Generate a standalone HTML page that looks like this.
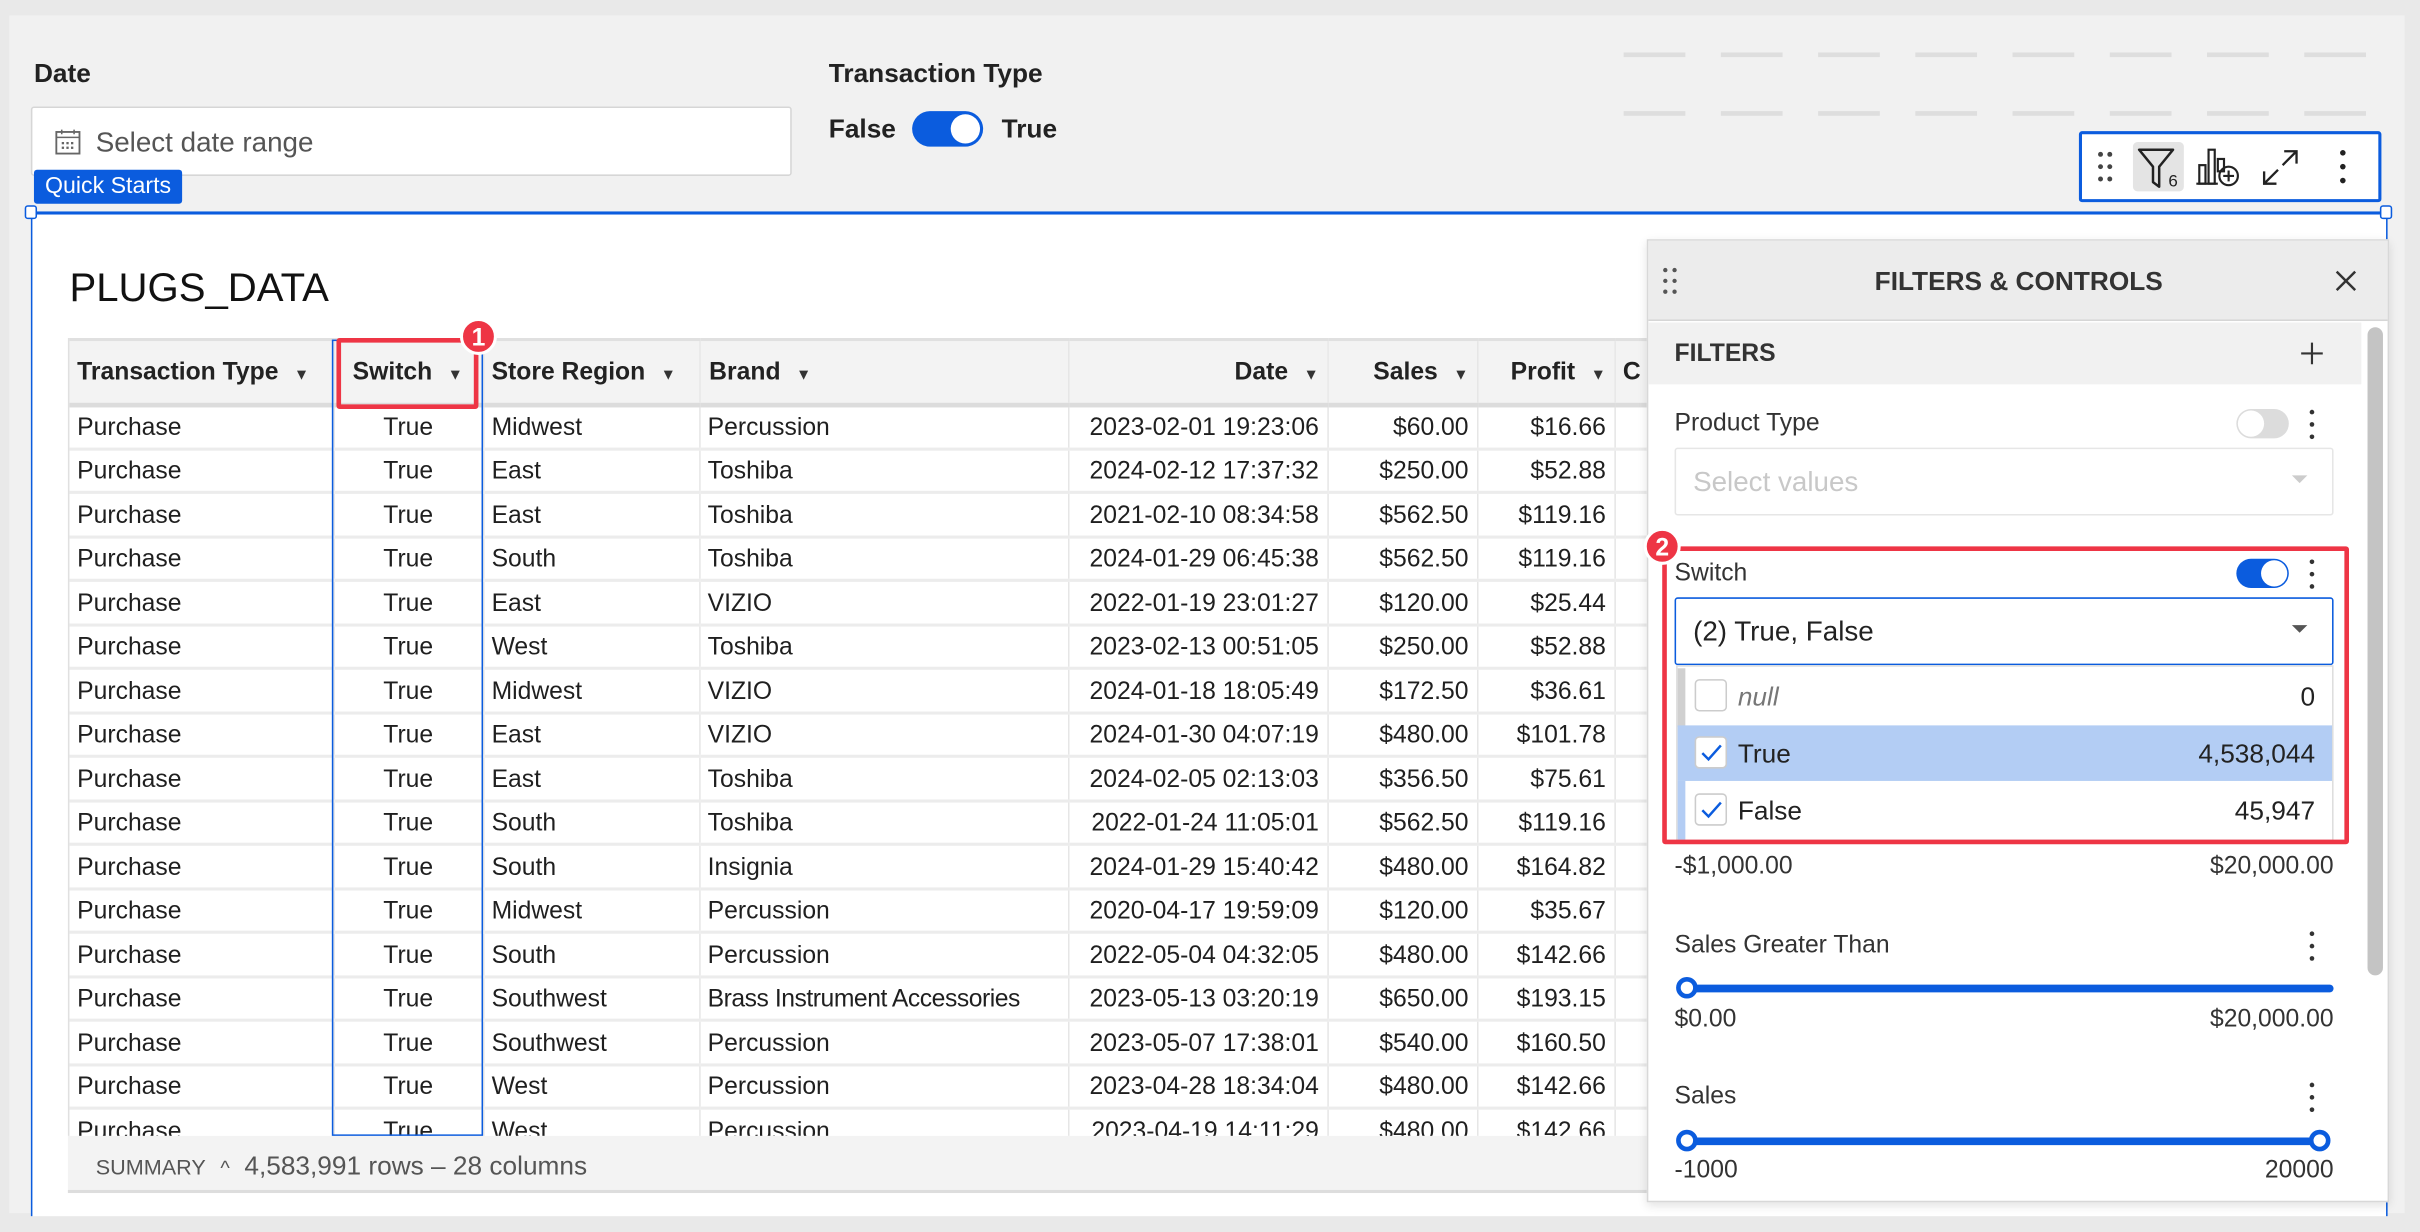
<!DOCTYPE html>
<html><head><meta charset="utf-8"><style>
*{box-sizing:border-box;margin:0;padding:0}
html,body{width:2420px;height:1232px;overflow:hidden;background:#e9e9e9}
#w{position:absolute;left:0;top:0;width:1568px;height:798px;transform:scale(1.54337);transform-origin:0 0;font-family:"Liberation Sans",sans-serif;color:#1f1f1f}
.a{position:absolute}
.page{left:6px;top:10px;width:1552px;height:776px;background:#f1f1f1}
.lbl{font-size:17px;font-weight:bold;color:#222}
.dash{height:3px;background:#dedede;width:40px}
table{border-collapse:collapse;table-layout:fixed;font-size:16px}
td,th{height:28.5px;padding:3px 5px 0;border-right:1px solid #e6e6e6;border-bottom:2px solid #ececec;white-space:nowrap;overflow:hidden;text-align:left;font-weight:normal}
th{height:42px;background:#f3f3f3;border-bottom:3px solid #dcdcdc;border-top:2px solid #e0e0e0;font-weight:bold;font-size:16px;color:#222}
.r{text-align:right}.c{text-align:center}
.car{font-size:10px;margin-left:10px;color:#333}
.badge{width:24px;height:24px;border-radius:12px;background:#ee3545;color:#fff;font-weight:bold;font-size:16px;text-align:center;line-height:24px;border:2px solid #fff}
.hd{width:14px;height:14px;border-radius:8px;background:#fff;border:3px solid #0b5cde}
.sl{height:5px;background:#0b5cde;border-radius:3px}
.chk{width:21px;height:21px;border:1px solid #ccc;border-radius:3px;background:#fff}
</style></head><body><div id="w">
<div class="a page"></div>
<div class="a lbl" style="left:22px;top:38px">Date</div>
<div class="a" style="left:20px;top:69px;width:493px;height:45px;background:#fff;border:1px solid #d6d6d6;border-radius:2px"></div>
<svg class="a" style="left:35px;top:83px" width="18" height="18" viewBox="0 0 18 18"><rect x="1.5" y="2.5" width="15" height="14" fill="none" stroke="#666" stroke-width="1.2"/><line x1="1.5" y1="6" x2="16.5" y2="6" stroke="#666"/><line x1="5" y1="1" x2="5" y2="4" stroke="#666"/><line x1="13" y1="1" x2="13" y2="4" stroke="#666"/><g fill="#666"><rect x="5" y="9" width="1.5" height="1.5"/><rect x="8" y="9" width="1.5" height="1.5"/><rect x="11" y="9" width="1.5" height="1.5"/><rect x="5" y="12" width="1.5" height="1.5"/><rect x="8" y="12" width="1.5" height="1.5"/><rect x="11" y="12" width="1.5" height="1.5"/></g></svg>
<div class="a" style="left:62px;top:82px;font-size:18px;color:#555">Select date range</div>
<div class="a" style="left:22px;top:110px;width:96px;height:22px;background:#0b5cde;color:#fff;font-size:15px;line-height:22px;text-align:center;border-radius:2px">Quick Starts</div>
<div class="a lbl" style="left:537px;top:38px">Transaction Type</div>
<div class="a lbl" style="left:537px;top:74px">False</div>
<div class="a" style="left:591px;top:72px;width:46px;height:23px;border-radius:12px;background:#0b5cde"><div class="a" style="right:2px;top:2px;width:19px;height:19px;border-radius:10px;background:#fff"></div></div>
<div class="a lbl" style="left:649px;top:74px">True</div>
<div class="a" style="left:1052px;top:34px;display:flex;gap:23px"><div class="dash"></div><div class="dash"></div><div class="dash"></div><div class="dash"></div><div class="dash"></div><div class="dash"></div><div class="dash"></div><div class="dash"></div></div>
<div class="a" style="left:1052px;top:72px;display:flex;gap:23px"><div class="dash"></div><div class="dash"></div><div class="dash"></div><div class="dash"></div><div class="dash"></div><div class="dash"></div><div class="dash"></div><div class="dash"></div></div>
<div class="a" style="left:20px;top:137px;width:1527px;height:651px;background:#fff;border-top:2px solid #0b5cde;border-left:1px solid #0b5cde;border-right:1px solid #0b5cde"></div>
<div class="a" style="left:16px;top:133px;width:8px;height:9px;border:1.5px solid #0b5cde;background:#fff;border-radius:2px"></div>
<div class="a" style="left:1542px;top:133px;width:8px;height:9px;border:1.5px solid #0b5cde;background:#fff;border-radius:2px"></div>
<div class="a" style="left:1347px;top:85px;width:196px;height:46px;background:#fff;border:2px solid #0b5cde;border-radius:2px"></div>
<svg class="a" style="left:1358px;top:96px" width="12" height="24"><g fill="#444"><circle cx="3" cy="4" r="1.6"/><circle cx="9" cy="4" r="1.6"/><circle cx="3" cy="12" r="1.6"/><circle cx="9" cy="12" r="1.6"/><circle cx="3" cy="20" r="1.6"/><circle cx="9" cy="20" r="1.6"/></g></svg>
<div class="a" style="left:1382px;top:92px;width:33px;height:32px;background:#e4e4e4;border-radius:3px"></div>
<svg class="a" style="left:1384px;top:94px" width="32" height="30"><path d="M2 3 H24 L15 14 V27 L11 24 V14 Z" fill="none" stroke="#222" stroke-width="1.6" stroke-linejoin="round"/><text x="21" y="27" font-size="11" font-family="Liberation Sans" fill="#222">6</text></svg>
<svg class="a" style="left:1423px;top:93px" width="32" height="32"><g fill="none" stroke="#222" stroke-width="1.4"><rect x="2" y="14" width="4" height="12"/><rect x="8" y="4" width="4" height="22"/><rect x="14" y="10" width="4" height="8"/><line x1="0" y1="26" x2="14" y2="26"/><circle cx="21" cy="21" r="6"/><line x1="21" y1="17.5" x2="21" y2="24.5"/><line x1="17.5" y1="21" x2="24.5" y2="21"/></g></svg>
<svg class="a" style="left:1464px;top:95px" width="28" height="28"><g fill="none" stroke="#222" stroke-width="1.5"><path d="M16 3H24V11M24 3L15 12"/><path d="M3 16V24H11M3 24L12 15"/></g></svg>
<svg class="a" style="left:1514px;top:96px" width="8" height="24"><g fill="#222"><circle cx="4" cy="3" r="1.8"/><circle cx="4" cy="12" r="1.8"/><circle cx="4" cy="21" r="1.8"/></g></svg>
<div class="a" style="left:45px;top:171px;font-size:26px;color:#111">PLUGS_DATA</div>
<div class="a" style="left:44px;top:219px;width:1040px;height:517px;overflow:hidden;border-left:1px solid #e0e0e0">
<table style="width:1200px">
<colgroup><col style="width:171px"><col style="width:97px"><col style="width:140px"><col style="width:239px"><col style="width:168px"><col style="width:97px"><col style="width:89px"><col style="width:199px"></colgroup>
<tr><th>Transaction Type<span class="car">▼</span></th><th style="padding-left:12px">Switch<span class="car">▼</span></th><th>Store Region<span class="car">▼</span></th><th style="padding-left:6px">Brand<span class="car">▼</span></th><th class="r">Date<span class="car">▼</span></th><th class="r">Sales<span class="car">▼</span></th><th class="r">Profit<span class="car">▼</span></th><th>C</th></tr>
<tr><td>Purchase</td><td class="c">True</td><td>Midwest</td><td>Percussion</td><td class="r">2023-02-01 19:23:06</td><td class="r">$60.00</td><td class="r">$16.66</td><td></td></tr>
<tr><td>Purchase</td><td class="c">True</td><td>East</td><td>Toshiba</td><td class="r">2024-02-12 17:37:32</td><td class="r">$250.00</td><td class="r">$52.88</td><td></td></tr>
<tr><td>Purchase</td><td class="c">True</td><td>East</td><td>Toshiba</td><td class="r">2021-02-10 08:34:58</td><td class="r">$562.50</td><td class="r">$119.16</td><td></td></tr>
<tr><td>Purchase</td><td class="c">True</td><td>South</td><td>Toshiba</td><td class="r">2024-01-29 06:45:38</td><td class="r">$562.50</td><td class="r">$119.16</td><td></td></tr>
<tr><td>Purchase</td><td class="c">True</td><td>East</td><td>VIZIO</td><td class="r">2022-01-19 23:01:27</td><td class="r">$120.00</td><td class="r">$25.44</td><td></td></tr>
<tr><td>Purchase</td><td class="c">True</td><td>West</td><td>Toshiba</td><td class="r">2023-02-13 00:51:05</td><td class="r">$250.00</td><td class="r">$52.88</td><td></td></tr>
<tr><td>Purchase</td><td class="c">True</td><td>Midwest</td><td>VIZIO</td><td class="r">2024-01-18 18:05:49</td><td class="r">$172.50</td><td class="r">$36.61</td><td></td></tr>
<tr><td>Purchase</td><td class="c">True</td><td>East</td><td>VIZIO</td><td class="r">2024-01-30 04:07:19</td><td class="r">$480.00</td><td class="r">$101.78</td><td></td></tr>
<tr><td>Purchase</td><td class="c">True</td><td>East</td><td>Toshiba</td><td class="r">2024-02-05 02:13:03</td><td class="r">$356.50</td><td class="r">$75.61</td><td></td></tr>
<tr><td>Purchase</td><td class="c">True</td><td>South</td><td>Toshiba</td><td class="r">2022-01-24 11:05:01</td><td class="r">$562.50</td><td class="r">$119.16</td><td></td></tr>
<tr><td>Purchase</td><td class="c">True</td><td>South</td><td>Insignia</td><td class="r">2024-01-29 15:40:42</td><td class="r">$480.00</td><td class="r">$164.82</td><td></td></tr>
<tr><td>Purchase</td><td class="c">True</td><td>Midwest</td><td>Percussion</td><td class="r">2020-04-17 19:59:09</td><td class="r">$120.00</td><td class="r">$35.67</td><td></td></tr>
<tr><td>Purchase</td><td class="c">True</td><td>South</td><td>Percussion</td><td class="r">2022-05-04 04:32:05</td><td class="r">$480.00</td><td class="r">$142.66</td><td></td></tr>
<tr><td>Purchase</td><td class="c">True</td><td>Southwest</td><td style="font-size:16px;padding:3px 3px 0 5px;letter-spacing:-0.3px">Brass Instrument Accessories</td><td class="r">2023-05-13 03:20:19</td><td class="r">$650.00</td><td class="r">$193.15</td><td></td></tr>
<tr><td>Purchase</td><td class="c">True</td><td>Southwest</td><td>Percussion</td><td class="r">2023-05-07 17:38:01</td><td class="r">$540.00</td><td class="r">$160.50</td><td></td></tr>
<tr><td>Purchase</td><td class="c">True</td><td>West</td><td>Percussion</td><td class="r">2023-04-28 18:34:04</td><td class="r">$480.00</td><td class="r">$142.66</td><td></td></tr>
<tr><td>Purchase</td><td class="c">True</td><td>West</td><td>Percussion</td><td class="r">2023-04-19 14:11:29</td><td class="r">$480.00</td><td class="r">$142.66</td><td></td></tr>
</table></div>
<div class="a" style="left:215px;top:220px;width:98px;height:516px;border:1.5px solid #0b5cde"></div>
<div class="a" style="left:218px;top:219px;width:92px;height:46px;border:3px solid #ee3545;border-radius:2px"></div>
<div class="a badge" style="left:298px;top:206px">1</div>
<div class="a" style="left:44px;top:736px;width:1030px;height:37px;background:#f3f3f3;border-bottom:2px solid #ddd;font-size:17px;color:#555;line-height:40px;padding-left:18px"><span style="font-size:14px">SUMMARY</span>&nbsp;&nbsp;<span style="font-size:13px">^</span>&nbsp;&nbsp;4,583,991 rows – 28 columns</div>
<div class="a" style="left:1067px;top:155px;width:481px;height:624px;background:#fff;border:1px solid #d8d8d8;box-shadow:0 2px 6px rgba(0,0,0,.12)"></div>
<div class="a" style="left:1068px;top:156px;width:479px;height:52px;background:#ececec;border-bottom:1px solid #d6d6d6"></div>
<svg class="a" style="left:1077px;top:172px" width="10" height="20"><g fill="#555"><circle cx="2" cy="3" r="1.4"/><circle cx="8" cy="3" r="1.4"/><circle cx="2" cy="10" r="1.4"/><circle cx="8" cy="10" r="1.4"/><circle cx="2" cy="17" r="1.4"/><circle cx="8" cy="17" r="1.4"/></g></svg>
<div class="a" style="left:1068px;top:173px;width:480px;text-align:center;font-size:17px;font-weight:bold;color:#333">FILTERS &amp; CONTROLS</div>
<svg class="a" style="left:1512px;top:174px" width="16" height="16"><path d="M2 2L14 14M14 2L2 14" stroke="#333" stroke-width="1.6"/></svg>
<div class="a" style="left:1068px;top:209px;width:462px;height:40px;background:#f1f1f1"></div>
<div class="a" style="left:1085px;top:221px;font-size:16px;font-weight:bold;color:#333">FILTERS</div>
<svg class="a" style="left:1490px;top:221px" width="16" height="16"><path d="M8 1V15M1 8H15" stroke="#333" stroke-width="1.4"/></svg>
<div class="a" style="left:1534px;top:212px;width:10px;height:420px;background:#c4c4c4;border-radius:5px"></div>
<div class="a" style="left:1085px;top:266px;font-size:16px;color:#333">Product Type</div>
<div class="a" style="left:1449px;top:265px;width:34px;height:19px;border-radius:10px;background:#dcdcdc"><div class="a" style="left:1px;top:1px;width:17px;height:17px;border-radius:9px;background:#fff"></div></div>
<svg class="a" style="left:1494px;top:264px" width="8" height="22"><g fill="#333"><circle cx="4" cy="3" r="1.5"/><circle cx="4" cy="11" r="1.5"/><circle cx="4" cy="19" r="1.5"/></g></svg>
<div class="a" style="left:1085px;top:290px;width:427px;height:44px;border:1px solid #e6e6e6;border-radius:2px"></div>
<div class="a" style="left:1097px;top:302px;font-size:18px;color:#c8c8c8">Select values</div>
<div class="a" style="left:1485px;top:308px;border-left:5px solid transparent;border-right:5px solid transparent;border-top:5px solid #ccc"></div>
<div class="a" style="left:1085px;top:363px;font-size:16px;color:#333">Switch</div>
<div class="a" style="left:1449px;top:362px;width:34px;height:19px;border-radius:10px;background:#0b5cde"><div class="a" style="right:1px;top:1px;width:17px;height:17px;border-radius:9px;background:#fff"></div></div>
<svg class="a" style="left:1494px;top:361px" width="8" height="22"><g fill="#333"><circle cx="4" cy="3" r="1.5"/><circle cx="4" cy="11" r="1.5"/><circle cx="4" cy="19" r="1.5"/></g></svg>
<div class="a" style="left:1085px;top:387px;width:427px;height:44px;border:1.5px solid #0b5cde;border-radius:2px"></div>
<div class="a" style="left:1097px;top:399px;font-size:18px;color:#222">(2) True, False</div>
<div class="a" style="left:1485px;top:405px;border-left:5px solid transparent;border-right:5px solid transparent;border-top:5px solid #555"></div>
<div class="a" style="left:1086px;top:431px;width:426px;height:114px;background:#fff;border:1px solid #ddd"></div>
<div class="a" style="left:1087px;top:433px;width:5px;height:38px;background:#d0d0d0"></div>
<div class="a" style="left:1087px;top:470px;width:424px;height:36px;background:#b3cdf4"></div>
<div class="a" style="left:1087px;top:506px;width:5px;height:38px;background:#b3cdf4"></div>
<div class="a chk" style="left:1098px;top:440px"></div>
<div class="a" style="left:1126px;top:442px;font-size:17px;font-style:italic;color:#777">null</div>
<div class="a" style="left:1470px;top:442px;width:30px;text-align:right;font-size:17px;color:#222">0</div>
<div class="a chk" style="left:1098px;top:477px"></div>
<svg class="a" style="left:1101px;top:481px" width="16" height="14"><path d="M2 7L6 11L14 2" fill="none" stroke="#0b5cde" stroke-width="1.6"/></svg>
<div class="a" style="left:1126px;top:479px;font-size:17px;color:#222">True</div>
<div class="a" style="left:1380px;top:479px;width:120px;text-align:right;font-size:17px;color:#222">4,538,044</div>
<div class="a chk" style="left:1098px;top:514px"></div>
<svg class="a" style="left:1101px;top:518px" width="16" height="14"><path d="M2 7L6 11L14 2" fill="none" stroke="#0b5cde" stroke-width="1.6"/></svg>
<div class="a" style="left:1126px;top:516px;font-size:17px;color:#222">False</div>
<div class="a" style="left:1380px;top:516px;width:120px;text-align:right;font-size:17px;color:#222">45,947</div>
<div class="a" style="left:1077px;top:354px;width:445px;height:193px;border:3px solid #ee3545;border-radius:2px"></div>
<div class="a badge" style="left:1065px;top:342px">2</div>
<div class="a" style="left:1085px;top:553px;font-size:16px;color:#333">-$1,000.00</div>
<div class="a" style="left:1400px;top:553px;width:112px;text-align:right;font-size:16px;color:#333">$20,000.00</div>
<div class="a" style="left:1085px;top:604px;font-size:16px;color:#333">Sales Greater Than</div>
<svg class="a" style="left:1494px;top:602px" width="8" height="22"><g fill="#333"><circle cx="4" cy="3" r="1.5"/><circle cx="4" cy="11" r="1.5"/><circle cx="4" cy="19" r="1.5"/></g></svg>
<div class="a sl" style="left:1092px;top:638px;width:420px"></div>
<div class="a hd" style="left:1086px;top:633px"></div>
<div class="a" style="left:1085px;top:652px;font-size:16px;color:#333">$0.00</div>
<div class="a" style="left:1400px;top:652px;width:112px;text-align:right;font-size:16px;color:#333">$20,000.00</div>
<div class="a" style="left:1085px;top:702px;font-size:16px;color:#333">Sales</div>
<svg class="a" style="left:1494px;top:700px" width="8" height="22"><g fill="#333"><circle cx="4" cy="3" r="1.5"/><circle cx="4" cy="11" r="1.5"/><circle cx="4" cy="19" r="1.5"/></g></svg>
<div class="a sl" style="left:1092px;top:737px;width:412px"></div>
<div class="a hd" style="left:1086px;top:732px"></div>
<div class="a hd" style="left:1496px;top:732px"></div>
<div class="a" style="left:1085px;top:750px;font-size:16px;color:#333">-1000</div>
<div class="a" style="left:1400px;top:750px;width:112px;text-align:right;font-size:16px;color:#333">20000</div>
</div></body></html>
